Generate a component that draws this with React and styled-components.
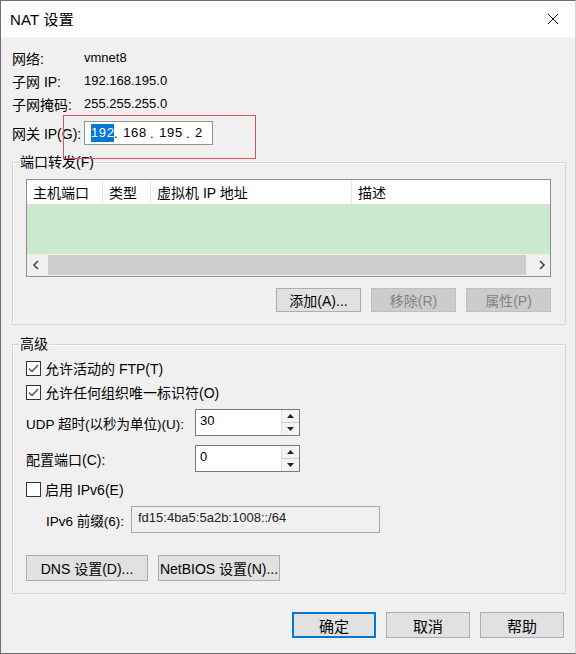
import React from "react";
import styled, { createGlobalStyle } from "styled-components";

const GlobalStyle = createGlobalStyle`
  html, body {
    margin: 0;
    padding: 0;
    background: #f0f0f0;
  }
  body {
    font-family: "Liberation Sans", "Noto Sans CJK SC", sans-serif;
    font-size: 14px;
    color: #000;
  }
`;

const Window = styled.div`
  width: 576px;
  height: 654px;
  box-sizing: border-box;
  border: 1px solid #6f6f6f;
  border-right-color: #d4d4d4;
  background: #f0f0f0;
  display: flex;
  flex-direction: column;
  overflow: hidden;
`;

const TitleBar = styled.div`
  height: 36px;
  flex: none;
  background: #fff;
  display: flex;
  align-items: center;
  justify-content: space-between;
  padding: 0 16px 0 9px;
`;

const Title = styled.div`
  font-size: 15px;
  letter-spacing: 0.2px;
  margin-top: -2px;
`;

const CloseBtn = styled.div`
  width: 12px;
  height: 12px;
  display: flex;
`;

const Body = styled.div`
  padding: 9px 9px 0 11px;
  display: flex;
  flex-direction: column;
`;

const InfoRow = styled.div`
  height: ${(p) => p.$h || 23}px;
  margin-top: ${(p) => p.$mt || 0}px;
  display: flex;
  align-items: center;
  position: relative;
`;

const InfoLabel = styled.div`
  width: 72px;
  flex: none;
  white-space: nowrap;
`;

const InfoValue = styled.div`
  font-size: 13px;
`;

const IpBox = styled.div`
  width: 129px;
  height: 24px;
  box-sizing: border-box;
  border: 1px solid #8d968d;
  background: #fff;
  display: flex;
  align-items: center;
  padding-left: 6px;
  font-size: 13px;
`;

const IpDot = styled.span`
  width: 6px;
  text-align: left;
`;

const IpNum = styled.span`
  width: ${(p) => p.$w}px;
  height: 18px;
  line-height: 18px;
  text-align: center;
  letter-spacing: 0.6px;
  background: ${(p) => (p.$sel ? "#0078d7" : "#fff")};
  color: ${(p) => (p.$sel ? "#fff" : "#000")};
`;

const Highlight = styled.div`
  position: absolute;
  left: 51px;
  top: -4px;
  width: 193px;
  height: 44px;
  box-sizing: border-box;
  border: 1px solid #e0505e;
  pointer-events: none;
`;

const Group = styled.fieldset`
  margin: ${(p) => p.$mt}px 0 0;
  padding: 0;
  min-width: 0;
  border: 1px solid #d6d6d6;
  box-shadow: inset 1px 1px 0 #fff;
`;

const Legend = styled.legend`
  margin-left: 6px;
  padding: 0 1px;
  line-height: 18px;
  font-size: 14px;
`;

const GroupBody = styled.div`
  padding: ${(p) => p.$pt}px 14px 12px 13px;
  display: flex;
  flex-direction: column;
`;

const Table = styled.div`
  height: 98px;
  box-sizing: border-box;
  border: 1px solid #8a8f96;
  display: flex;
  flex-direction: column;
  background: #fff;
`;

const HeaderRow = styled.div`
  height: 24px;
  flex: none;
  display: flex;
  background: #fff;
`;

const HeaderCell = styled.div`
  width: ${(p) => (p.$w ? `${p.$w}px` : "auto")};
  flex: ${(p) => (p.$w ? "none" : "1")};
  box-sizing: border-box;
  padding-left: 6px;
  display: flex;
  align-items: center;
  border-right: ${(p) => (p.$w ? "1px solid #e5e5e5" : "none")};
  white-space: nowrap;
`;

const TableBody = styled.div`
  flex: 1;
  background: #cce8cf;
`;

const HScroll = styled.div`
  height: 22px;
  flex: none;
  display: flex;
  align-items: center;
  background: #f0f0f0;
`;

const ScrollArrow = styled.div`
  width: 17px;
  height: 100%;
  display: flex;
  align-items: center;
  justify-content: center;
  flex: none;
`;

const ScrollThumb = styled.div`
  flex: 1;
  height: 20px;
  margin: 0 7px 0 4px;
  background: #cdcdcd;
`;

const ButtonRow = styled.div`
  display: flex;
  justify-content: ${(p) => p.$justify || "flex-end"};
  gap: 10px;
  margin-top: ${(p) => p.$mt || 0}px;
`;

const Button = styled.div`
  width: ${(p) => p.$w || 84}px;
  height: ${(p) => p.$h || 24}px;
  box-sizing: border-box;
  border: ${(p) =>
    p.$default ? "2px solid #0078d7" : p.$disabled ? "1px solid #bfbfbf" : "1px solid #adadad"};
  background: ${(p) => (p.$disabled ? "#cccccc" : "#e1e1e1")};
  color: ${(p) => (p.$disabled ? "#838383" : "#000")};
  display: flex;
  align-items: center;
  justify-content: center;
  font-size: ${(p) => p.$fs || 14}px;
  white-space: nowrap;
`;

const CheckRow = styled.div`
  height: 24px;
  margin-top: ${(p) => p.$mt || 0}px;
  display: flex;
  align-items: center;
  gap: 4px;
`;

const CheckBox = styled.div`
  width: 15px;
  height: 15px;
  box-sizing: border-box;
  border: 1px solid #333;
  background: #fff;
  display: flex;
  align-items: center;
  justify-content: center;
  flex: none;
`;

const FieldRow = styled.div`
  height: 27px;
  margin-top: ${(p) => p.$mt || 0}px;
  display: flex;
  align-items: center;
  padding-left: ${(p) => p.$pl || 0}px;
`;

const FieldLabel = styled.div`
  width: ${(p) => p.$w}px;
  flex: none;
  white-space: nowrap;
  font-size: ${(p) => p.$fs || 14}px;
`;

const SpinBox = styled.div`
  width: 105px;
  height: 27px;
  box-sizing: border-box;
  border: 1px solid #7a7a7a;
  background: #fff;
  display: flex;
`;

const SpinText = styled.div`
  flex: 1;
  padding: 3px 0 0 4px;
  font-size: 13px;
`;

const SpinButtons = styled.div`
  width: 17px;
  display: flex;
  flex-direction: column;
  border-left: 1px solid #e0e0e0;
  background: #f4f4f4;
`;

const SpinBtn = styled.div`
  flex: 1;
  display: flex;
  align-items: center;
  justify-content: center;
  border-top: ${(p) => (p.$bottom ? "1px solid #d0d0d0" : "none")};
`;

const TextBox = styled.div`
  width: 249px;
  height: 27px;
  box-sizing: border-box;
  border: 1px solid #a8a8a8;
  background: #f0f0f0;
  padding: 3px 0 0 6px;
  font-size: 13px;
  color: #222;
`;

const Footer = styled.div`
  display: flex;
  justify-content: flex-end;
  gap: 10px;
  padding: 18px 11px 0 0;
`;

const Check = () => (
  <svg width="11" height="9" viewBox="0 0 11 9">
    <polyline points="1,4.5 4,7.5 10,1" fill="none" stroke="#505050" strokeWidth="1.4" />
  </svg>
);

const Arrow = ({ dir }) => (
  <svg width="8" height="10" viewBox="0 0 8 10">
    <polyline
      points={dir === "left" ? "6,1 2,5 6,9" : "2,1 6,5 2,9"}
      fill="none"
      stroke="#444"
      strokeWidth="1.6"
    />
  </svg>
);

const Tri = ({ up }) => (
  <svg width="7" height="4" viewBox="0 0 7 4">
    <polygon points={up ? "0,4 3.5,0 7,4" : "0,0 7,0 3.5,4"} fill="#222" />
  </svg>
);

const Spinner = ({ value }) => (
  <SpinBox>
    <SpinText>{value}</SpinText>
    <SpinButtons>
      <SpinBtn>
        <Tri up />
      </SpinBtn>
      <SpinBtn $bottom>
        <Tri />
      </SpinBtn>
    </SpinButtons>
  </SpinBox>
);

const columns = [
  { title: "主机端口", w: 76 },
  { title: "类型", w: 48 },
  { title: "虚拟机 IP 地址", w: 201 },
  { title: "描述" },
];

const ipParts = [
  { n: "192", w: 23, sel: true },
  { n: "168", w: 30 },
  { n: "195", w: 30 },
  { n: "2", w: 14 },
];

export default function App() {
  return (
    <>
      <GlobalStyle />
      <Window>
        <TitleBar>
          <Title>NAT 设置</Title>
          <CloseBtn>
            <svg width="12" height="12" viewBox="0 0 12 12">
              <path d="M1 1 L11 11 M11 1 L1 11" stroke="#111" strokeWidth="1" />
            </svg>
          </CloseBtn>
        </TitleBar>

        <Body>
          <InfoRow>
            <InfoLabel>网络:</InfoLabel>
            <InfoValue>vmnet8</InfoValue>
          </InfoRow>
          <InfoRow>
            <InfoLabel>子网 IP:</InfoLabel>
            <InfoValue>192.168.195.0</InfoValue>
          </InfoRow>
          <InfoRow>
            <InfoLabel>子网掩码:</InfoLabel>
            <InfoValue>255.255.255.0</InfoValue>
          </InfoRow>
          <InfoRow $h={28} $mt={4}>
            <InfoLabel>网关 IP(G):</InfoLabel>
            <IpBox>
              {ipParts.map((p, i) => (
                <React.Fragment key={i}>
                  {i > 0 && <IpDot>.</IpDot>}
                  <IpNum $w={p.w} $sel={p.sel}>
                    {p.n}
                  </IpNum>
                </React.Fragment>
              ))}
            </IpBox>
            <Highlight />
          </InfoRow>

          <Group $mt={6}>
            <Legend>端口转发(F)</Legend>
            <GroupBody $pt={8}>
              <Table>
                <HeaderRow>
                  {columns.map((c) => (
                    <HeaderCell key={c.title} $w={c.w}>
                      {c.title}
                    </HeaderCell>
                  ))}
                </HeaderRow>
                <TableBody />
                <HScroll>
                  <ScrollArrow>
                    <Arrow dir="left" />
                  </ScrollArrow>
                  <ScrollThumb />
                  <ScrollArrow>
                    <Arrow dir="right" />
                  </ScrollArrow>
                </HScroll>
              </Table>
              <ButtonRow $mt={11}>
                <Button $w={85}>添加(A)...</Button>
                <Button $w={85} $disabled>
                  移除(R)
                </Button>
                <Button $w={85} $disabled>
                  属性(P)
                </Button>
              </ButtonRow>
            </GroupBody>
          </Group>

          <Group $mt={10}>
            <Legend>高级</Legend>
            <GroupBody $pt={3}>
              <CheckRow>
                <CheckBox>
                  <Check />
                </CheckBox>
                允许活动的 FTP(T)
              </CheckRow>
              <CheckRow>
                <CheckBox>
                  <Check />
                </CheckBox>
                允许任何组织唯一标识符(O)
              </CheckRow>
              <FieldRow $mt={5}>
                <FieldLabel $w={169} $fs={13.5}>
                  UDP 超时(以秒为单位)(U):
                </FieldLabel>
                <Spinner value="30" />
              </FieldRow>
              <FieldRow $mt={9}>
                <FieldLabel $w={169}>配置端口(C):</FieldLabel>
                <Spinner value="0" />
              </FieldRow>
              <CheckRow $mt={5}>
                <CheckBox />
                启用 IPv6(E)
              </CheckRow>
              <FieldRow $mt={5} $pl={20}>
                <FieldLabel $w={85} $fs={13.5}>
                  IPv6 前缀(6):
                </FieldLabel>
                <TextBox>fd15:4ba5:5a2b:1008::/64</TextBox>
              </FieldRow>
              <ButtonRow $mt={22} $justify="flex-start">
                <Button $w={122} $h={26}>
                  DNS 设置(D)...
                </Button>
                <Button $w={122} $h={26}>
                  NetBIOS 设置(N)...
                </Button>
              </ButtonRow>
            </GroupBody>
          </Group>
        </Body>

        <Footer>
          <Button $h={26} $default $fs={15}>
            确定
          </Button>
          <Button $h={26} $fs={15}>
            取消
          </Button>
          <Button $h={26} $fs={15}>
            帮助
          </Button>
        </Footer>
      </Window>
    </>
  );
}
